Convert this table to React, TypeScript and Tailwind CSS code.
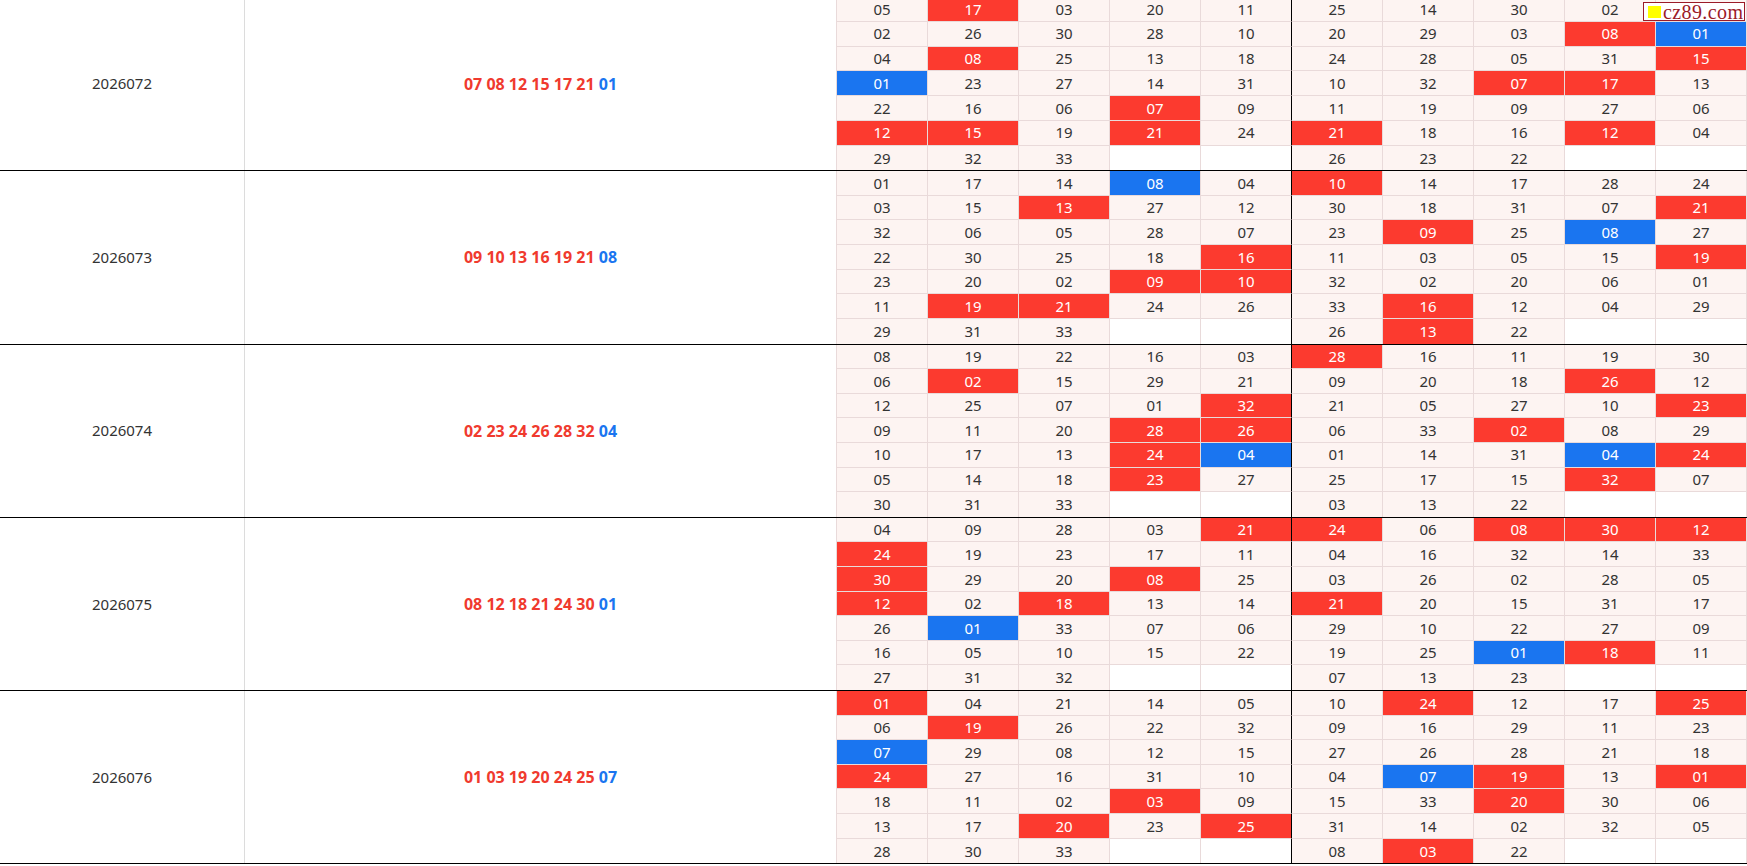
import React from "react";

type Group = { issue: string; red: string[]; blue: string; rows: string[] };

const groups: Group[] = [
  {
    issue: "2026072",
    red: ["07", "08", "12", "15", "17", "21"],
    blue: "01",
    rows: [
      "05 17 03 20 11 25 14 30 02 33",
      "02 26 30 28 10 20 29 03 08 01",
      "04 08 25 13 18 24 28 05 31 15",
      "01 23 27 14 31 10 32 07 17 13",
      "22 16 06 07 09 11 19 09 27 06",
      "12 15 19 21 24 21 18 16 12 04",
      "29 32 33 - - 26 23 22 - -",
    ],
  },
  {
    issue: "2026073",
    red: ["09", "10", "13", "16", "19", "21"],
    blue: "08",
    rows: [
      "01 17 14 08 04 10 14 17 28 24",
      "03 15 13 27 12 30 18 31 07 21",
      "32 06 05 28 07 23 09 25 08 27",
      "22 30 25 18 16 11 03 05 15 19",
      "23 20 02 09 10 32 02 20 06 01",
      "11 19 21 24 26 33 16 12 04 29",
      "29 31 33 - - 26 13 22 - -",
    ],
  },
  {
    issue: "2026074",
    red: ["02", "23", "24", "26", "28", "32"],
    blue: "04",
    rows: [
      "08 19 22 16 03 28 16 11 19 30",
      "06 02 15 29 21 09 20 18 26 12",
      "12 25 07 01 32 21 05 27 10 23",
      "09 11 20 28 26 06 33 02 08 29",
      "10 17 13 24 04 01 14 31 04 24",
      "05 14 18 23 27 25 17 15 32 07",
      "30 31 33 - - 03 13 22 - -",
    ],
  },
  {
    issue: "2026075",
    red: ["08", "12", "18", "21", "24", "30"],
    blue: "01",
    rows: [
      "04 09 28 03 21 24 06 08 30 12",
      "24 19 23 17 11 04 16 32 14 33",
      "30 29 20 08 25 03 26 02 28 05",
      "12 02 18 13 14 21 20 15 31 17",
      "26 01 33 07 06 29 10 22 27 09",
      "16 05 10 15 22 19 25 01 18 11",
      "27 31 32 - - 07 13 23 - -",
    ],
  },
  {
    issue: "2026076",
    red: ["01", "03", "19", "20", "24", "25"],
    blue: "07",
    rows: [
      "01 04 21 14 05 10 24 12 17 25",
      "06 19 26 22 32 09 16 29 11 23",
      "07 29 08 12 15 27 26 28 21 18",
      "24 27 16 31 10 04 07 19 13 01",
      "18 11 02 03 09 15 33 20 30 06",
      "13 17 20 23 25 31 14 02 32 05",
      "28 30 33 - - 08 03 22 - -",
    ],
  },
];

function Cell({ v, red, blue, col, last }: { v: string; red: string[]; blue: string; col: number; last: boolean }) {
  const empty = v === "-";
  const isBlue = !empty && v === blue;
  const isRed = !empty && !isBlue && red.includes(v);
  const bg = empty
    ? "bg-white"
    : isBlue
    ? "bg-[#1a75f0] text-white"
    : isRed
    ? "bg-[#fc3a2f] text-white"
    : "bg-[#fdf4f2] text-[#333]";
  const br = col === 4 ? "border-r-black" : "border-r-[#e9dada]";
  const bb = last ? "border-b-0" : "border-b";
  return (
    <div className={`flex items-center justify-center border-r ${bb} border-[#e9dada] ${br} ${bg}`}>
      {empty ? "" : v}
    </div>
  );
}

export default function App() {
  return (
    <div
      className="relative w-[1747px] h-[866px] overflow-hidden bg-white"
      style={{ fontFamily: '"Noto Sans", "Open Sans", sans-serif' }}
    >
      <div className="mt-[-3px]">
        {groups.map((g, gi) => (
          <div
            key={g.issue}
            className={`flex border-b border-black ${gi === 0 ? "h-[174.25px]" : "h-[173.25px]"}`}
          >
            <div className="w-[245px] shrink-0 border-r border-[#dcdcdc] flex items-center justify-center text-[15px] text-[#333]">
              {g.issue}
            </div>
            <div className="w-[591px] shrink-0 flex items-center justify-center text-[16px] font-bold">
              <span className="text-[#f03a2e]">{g.red.join(" ")}</span>
              <span className="text-[#1a75f0]">&nbsp;{g.blue}</span>
            </div>
            <div className="w-[911px] shrink-0 grid grid-cols-[repeat(10,91px)] grid-rows-[repeat(7,1fr)] border-l border-[#e9dada] text-[15px]">
              {g.rows.flatMap((r, ri) =>
                r.split(" ").map((v, ci) => (
                  <Cell key={`${ri}-${ci}`} v={v} red={g.red} blue={g.blue} col={ci} last={ri === 6} />
                ))
              )}
            </div>
          </div>
        ))}
      </div>
      <div className="absolute top-[2px] right-[2px] h-[19px] w-[102px] border border-[#9b1b28] bg-white flex items-center pl-[4px] gap-[2px] overflow-hidden">
        <span className="inline-block shrink-0 w-[13px] h-[12px] bg-[#ffff00]" />
        <span
          className="text-[#9b1b28] text-[20px] leading-none tracking-[0.4px] whitespace-nowrap"
          style={{ fontFamily: '"Liberation Serif", "DejaVu Serif", serif' }}
        >
          cz89.com
        </span>
      </div>
    </div>
  );
}
